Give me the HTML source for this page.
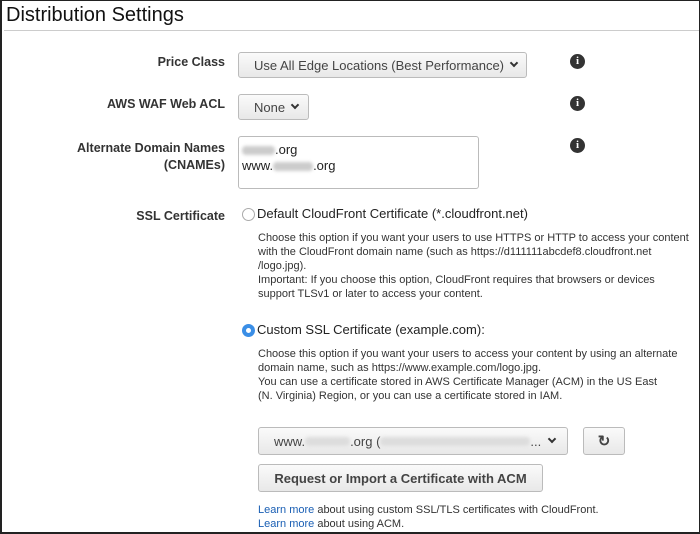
<!DOCTYPE html>
<html><head><style>
*{box-sizing:border-box;margin:0;padding:0}
body{width:700px;height:534px;position:relative;background:#fff;font-family:"Liberation Sans",Arial,sans-serif;color:#222;overflow:hidden}
.frame{position:absolute;left:0;top:0;width:700px;height:534px;border:2px solid #222;border-right-width:1px;border-top-width:1px}
.a{position:absolute;white-space:nowrap}
.h{left:6px;top:4px;font-size:20px;color:#111}
.hr{position:absolute;left:4px;right:0;top:30px;height:1px;background:#ccc}
.lb{font-weight:bold;font-size:12.5px;color:#333;text-align:right;right:475px}
.btn{position:absolute;border:1px solid #bbb;border-radius:3px;background:linear-gradient(#fafafa,#e8e8e8);font-size:13px;color:#444;display:flex;align-items:center}
.chev{display:inline-block;width:6px;height:6px;border-right:2px solid #333;border-bottom:2px solid #333;transform:rotate(45deg);margin-left:7px;margin-top:-4px}
.info{position:absolute;width:15px;height:15px;border-radius:50%;background:#333;color:#fff;font:bold 11px "Liberation Serif",serif;text-align:center;line-height:15px}
.d{font-size:11px;line-height:14px;color:#333;left:258px}
.bl{display:inline-block;height:9px;background:#ccc;border-radius:4px;filter:blur(1.5px);vertical-align:middle}
.radio{position:absolute;width:13px;height:13px;border-radius:50%;border:1px solid #aaa;background:#fff}
.t13{font-size:13px;color:#222}
a{color:#1a5fb4;text-decoration:none}
</style></head><body>
<div class="a h">Distribution Settings</div>
<div class="hr"></div>

<div class="a lb" style="top:55px">Price Class</div>
<div class="btn" style="left:238px;top:52px;width:289px;height:26px;padding-left:15px">Use All Edge Locations (Best Performance)<span class="chev"></span></div>
<div class="info" style="left:570px;top:54px">i</div>

<div class="a lb" style="top:97px">AWS WAF Web ACL</div>
<div class="btn" style="left:238px;top:94px;width:71px;height:26px;padding-left:15px">None<span class="chev"></span></div>
<div class="info" style="left:570px;top:96px">i</div>

<div class="a lb" style="top:140px;line-height:17px">Alternate Domain Names<br>(CNAMEs)</div>
<div style="position:absolute;left:238px;top:136px;width:241px;height:53px;border:1px solid #bbb;border-radius:3px"></div>
<div class="a t13" style="left:242px;top:142px;line-height:16px"><span class="bl" style="width:33px"></span>.org<br>www.<span class="bl" style="width:40px"></span>.org</div>
<div class="info" style="left:570px;top:138px">i</div>

<div class="a lb" style="top:209px">SSL Certificate</div>
<div class="radio" style="left:242px;top:208px"></div>
<div class="a t13" style="left:257px;top:206px">Default CloudFront Certificate (*.cloudfront.net)</div>
<div class="a d" style="top:231px">Choose this option if you want your users to use HTTPS or HTTP to access your content<br>with the CloudFront domain name (such as https://d111111abcdef8.cloudfront.net<br>/logo.jpg).<br>Important: If you choose this option, CloudFront requires that browsers or devices<br>support TLSv1 or later to access your content.</div>

<div class="radio" style="left:242px;top:324px;border:4px solid #3a8ee6"></div>
<div class="a t13" style="left:257px;top:322px">Custom SSL Certificate (example.com):</div>
<div class="a d" style="top:347px">Choose this option if you want your users to access your content by using an alternate<br>domain name, such as https://www.example.com/logo.jpg.<br>You can use a certificate stored in AWS Certificate Manager (ACM) in the US East<br>(N. Virginia) Region, or you can use a certificate stored in IAM.</div>

<div class="btn" style="left:258px;top:427px;width:310px;height:28px;padding-left:15px">www.<span class="bl" style="width:45px;background:#ddd"></span>.org (<span class="bl" style="width:150px;background:#ddd"></span>...<span class="chev" style="margin-left:8px"></span></div>
<div class="btn" style="left:583px;top:427px;width:42px;height:28px;justify-content:center;font-size:15px;font-weight:bold">&#x21bb;</div>
<div class="btn" style="left:258px;top:464px;width:285px;height:28px;justify-content:center;font-weight:bold;font-size:13px">Request or Import a Certificate with ACM</div>
<div class="a d" style="top:503px"><a>Learn more</a> about using custom SSL/TLS certificates with CloudFront.<br><a>Learn more</a> about using ACM.</div>
<div class="frame"></div>
</body></html>
